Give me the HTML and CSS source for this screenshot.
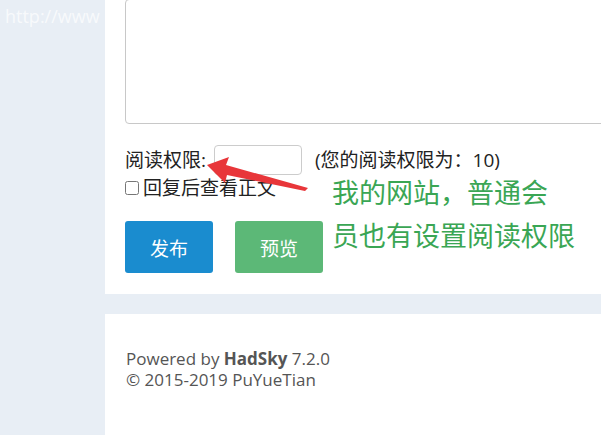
FILE: index.html
```html
<!DOCTYPE html>
<html lang="zh-CN">
<head>
  <meta charset="UTF-8" />
  <title>发布</title>
  <link rel="stylesheet" href="styles.css">
</head>
<body>

  <div class="side">
    <div class="mark">http://www</div>
  </div>

  <div class="main">
    <div class="panel">
      <textarea class="editor"></textarea>

      <div class="row">
        <label class="lbl" for="readLevel">阅读权限:</label>
        <input id="readLevel" class="level" type="text">
        <span class="hint">(您的阅读权限为：10)</span>
      </div>

      <label class="check">
        <input type="checkbox">回复后查看正文
      </label>

      <div class="actions">
        <button class="btn btn-post">发布</button>
        <button class="btn btn-preview">预览</button>
      </div>

      <!-- 截图上的标注 -->
      <svg class="arrow" width="120" height="40" viewBox="0 0 120 40">
        <polygon points="2,13 24,5 21,13 103,36 100,39 22,23 20,31" fill="#e8363a" />
      </svg>
      <div class="note">
        <span>我的网站，普通会</span>
        <span>员也有设置阅读权限</span>
      </div>
    </div>

    <div class="footer">
      <p>Powered by <b>HadSky</b> 7.2.0</p>
      <p>© 2015-2019 PuYueTian</p>
    </div>
  </div>

</body>
</html>
```

FILE: styles.css
```css
body {
  margin: 0;
  height: 100vh;
  display: flex;
  background: #e8eef5;
  font-family: "Open Sans", "Noto Sans CJK SC", sans-serif;
  color: #222;
  overflow: hidden;
}
.side {
  width: 105px;
  flex-shrink: 0;
  overflow: hidden;
}
.mark {
  padding: 4px 0 0 5px;
  font-size: 18px;
  color: rgba(255, 255, 255, 0.7);
  white-space: nowrap;
}
.main {
  flex: 1;
  display: flex;
  flex-direction: column;
  gap: 20px;
  min-width: 0;
}
.panel {
  position: relative;
  height: 294px;
  box-sizing: border-box;
  background: #fff;
  padding-left: 20px;
  overflow: hidden;
}
.editor {
  display: block;
  width: 520px;
  height: 125px;
  margin-top: -1px;
  box-sizing: border-box;
  border: 1px solid #c8c8c8;
  border-radius: 4px;
  resize: none;
}
.row {
  display: flex;
  align-items: center;
  margin-top: 21px;
  font-size: 19px;
  line-height: 22px;
  height: 30px;
}
.level {
  width: 88px;
  height: 30px;
  box-sizing: border-box;
  margin: 0 13px 0 8px;
  border: 1px solid #ccc;
  border-radius: 4px;
}
.hint {
  color: #222;
}
.check {
  display: flex;
  align-items: center;
  font-size: 19px;
  line-height: 22px;
  height: 24px;
  margin-top: 1px;
}
.check input {
  width: 14px;
  height: 14px;
  margin: 0 4px 0 0;
}
.actions {
  display: flex;
  gap: 22px;
  margin-top: 21px;
}
.btn {
  width: 88px;
  height: 52px;
  border: none;
  border-radius: 3px;
  color: #fff;
  font-family: "Noto Sans CJK SC", sans-serif;
  font-size: 19px;
  cursor: pointer;
}
.btn-post {
  background: #1a8ccf;
}
.btn-preview {
  background: #5cb877;
}
.arrow {
  position: absolute;
  left: 100px;
  top: 152px;
}
.note {
  position: absolute;
  left: 227px;
  top: 178px;
  display: flex;
  flex-direction: column;
  gap: 16px;
  font-family: "Noto Sans CJK SC", sans-serif;
  font-size: 27px;
  line-height: 27px;
  color: #3aa654;
  white-space: nowrap;
}
.footer {
  flex: 1;
  background: #fff;
  padding: 34px 0 0 21px;
  font-size: 17px;
  color: #555;
}
.footer p {
  margin: 0;
  line-height: 21px;
}
.footer b {
  color: #555;
}
```
